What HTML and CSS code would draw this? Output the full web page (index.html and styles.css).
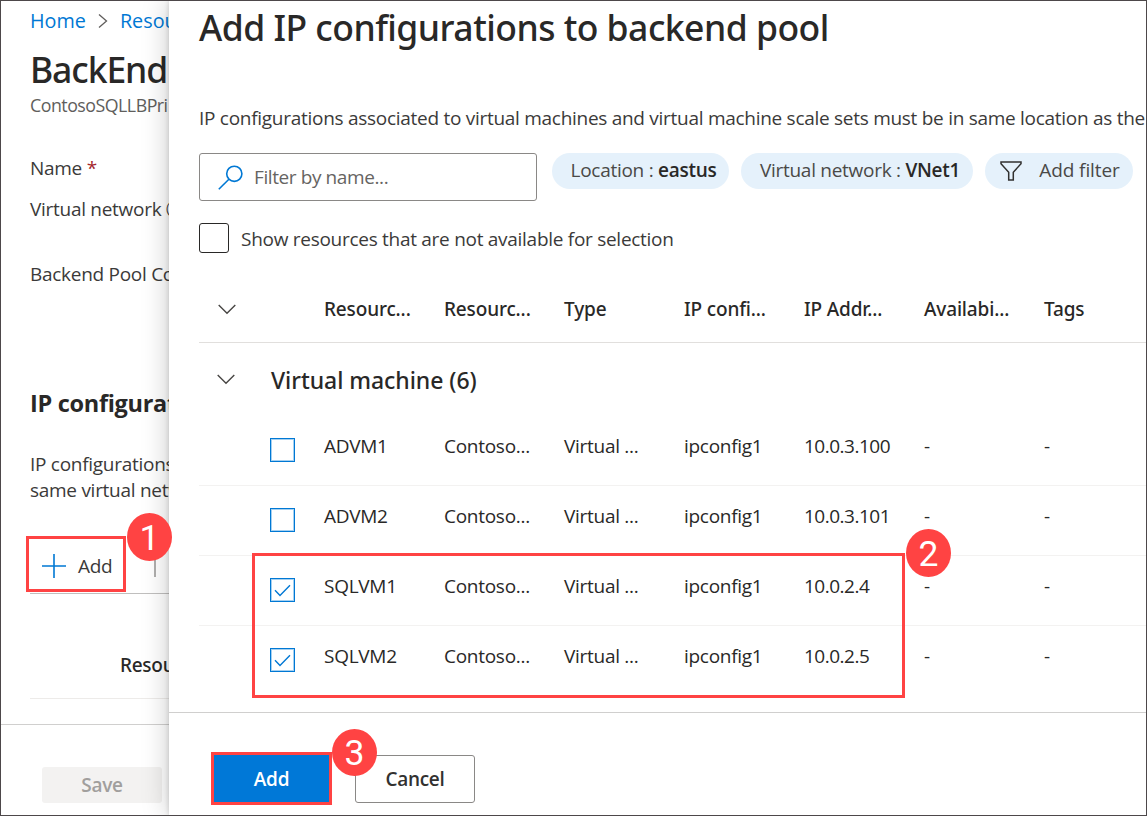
FILE: index.html
```html
<!DOCTYPE html>
<html lang="en">
<head>
<meta charset="utf-8">
<title>Add IP configurations to backend pool</title>
<link rel="stylesheet" href="styles.css">
</head>
<body>
<div class="frame">
  <aside class="blade">
    <nav class="crumbs"><a>Home</a><svg class="crumb-sep" width="10" height="16" viewBox="0 0 10 16"><path d="M1 1.5 8.5 8 1 14.5"/></svg><a>Resource</a></nav>
    <h1 class="blade-title">BackEnd</h1>
    <p class="blade-sub">ContosoSQLLBPri</p>
    <p class="field field-name">Name <span class="req">*</span></p>
    <p class="field field-vnet">Virtual network ⓘ</p>
    <p class="field field-pool">Backend Pool Configuration</p>
    <h2 class="section">IP configurations</h2>
    <p class="note">IP configurations<br>same virtual network</p>
    <div class="toolbar">
      <div class="tool-add">
        <svg width="24" height="24" viewBox="0 0 24 24"><path d="M12 0v24M0 12h24"/></svg>
        <span>Add</span>
        <i class="badge badge-one">1</i>
      </div>
      <i class="tool-sep"></i>
    </div>
    <div class="blade-head">Resource</div>
    <div class="blade-foot"><button class="save">Save</button></div>
  </aside>

  <main class="panel">
    <h1 class="title">Add IP configurations to backend pool</h1>
    <p class="desc">IP configurations associated to virtual machines and virtual machine scale sets must be in same location as the</p>
    <div class="filters">
      <div class="search">
        <svg width="25" height="25" viewBox="0 0 25 25"><circle cx="16.3" cy="8.8" r="7.6"/><path d="M10.9 14.2.8 24.3"/></svg>
        <span>Filter by name...</span>
      </div>
      <div class="chip chip-loc"><span>Location : <b>eastus</b></span></div>
      <div class="chip chip-net"><span>Virtual network : <b>VNet1</b></span></div>
      <div class="chip chip-add">
        <svg width="22" height="20" viewBox="0 0 22 20"><path d="M1 1h20v1.8l-7.7 8.4V19H8.7v-7.8L1 2.8z"/></svg>
        <span>Add filter</span>
      </div>
    </div>
    <div class="show"><i class="bigbox"></i><span>Show resources that are not available for selection</span></div>

    <section class="table">
      <div class="row head">
        <svg class="chev" width="18" height="11" viewBox="0 0 18 11"><path d="M.7 1 9 9.3 17.3 1"/></svg>
        <span>Resourc...</span><span>Resourc...</span><span>Type</span><span>IP confi...</span><span>IP Addr...</span><span>Availabi...</span><span>Tags</span>
      </div>
      <div class="group">
        <svg class="chev" width="18" height="11" viewBox="0 0 18 11"><path d="M.7 1 9 9.3 17.3 1"/></svg>
        <span>Virtual machine (6)</span>
      </div>
      <div class="row"><i class="box"></i><span>ADVM1</span><span>Contoso...</span><span>Virtual ...</span><span>ipconfig1</span><span class="ip">10.0.3.100</span><span>-</span><span>-</span></div>
      <div class="row"><i class="box"></i><span>ADVM2</span><span>Contoso...</span><span>Virtual ...</span><span>ipconfig1</span><span class="ip">10.0.3.101</span><span>-</span><span>-</span></div>
      <div class="picked">
        <div class="row"><i class="box"><svg width="17" height="13" viewBox="0 0 17 13"><path d="M1 6.2 6 11.4 16 1.2"/></svg></i><span>SQLVM1</span><span>Contoso...</span><span>Virtual ...</span><span>ipconfig1</span><span class="ip">10.0.2.4</span><span>-</span><span>-</span></div>
        <div class="row"><i class="box"><svg width="17" height="13" viewBox="0 0 17 13"><path d="M1 6.2 6 11.4 16 1.2"/></svg></i><span>SQLVM2</span><span>Contoso...</span><span>Virtual ...</span><span>ipconfig1</span><span class="ip">10.0.2.5</span><span>-</span><span>-</span></div>
        <div class="callout"><i class="badge badge-two">2</i></div>
      </div>
    </section>

    <footer class="foot">
      <button class="add">Add<i class="badge badge-three">3</i></button>
      <button class="cancel">Cancel</button>
    </footer>
  </main>
</div>
</body>
</html>
```
FILE: styles.css
```css
* { box-sizing: border-box; margin: 0; padding: 0; }
body {
  font-family: "Open Sans", "Noto Sans", sans-serif;
  font-size: 19px;
  line-height: 26px;
  letter-spacing: -0.28px;
  color: #3b3a39;
  background: #fff;
}
i { font-style: normal; }
svg { display: block; fill: none; flex: none; }
button { font: inherit; letter-spacing: inherit; }
.frame {
  display: flex;
  width: 1147px;
  height: 816px;
  border: 1px solid #4d484a;
  overflow: hidden;
}

/* Blade behind the panel */
.blade {
  display: flex;
  flex-direction: column;
  width: 168px;
  flex: none;
  white-space: nowrap;
}
.blade > * { margin-left: 29px; flex: none; }
.crumbs { display: flex; align-items: center; height: 26px; margin-top: 7px; font-size: 19.8px; letter-spacing: 0; color: #0078d4; }
.crumb-sep { margin: 0 12px 1px 12px; stroke: #605e5c; stroke-width: 1.3; }
.blade-title { margin-top: 11px; font-family: "Noto Sans", "Open Sans", sans-serif; font-size: 35.5px; line-height: 48px; font-weight: 500; letter-spacing: -1.1px; color: #292827; }
.blade-sub { margin-top: -1px; font-size: 17.8px; letter-spacing: -0.5px; color: #605e5c; }
.field-name { margin-top: 37px; }
.req { color: #a4262c; }
.field-vnet { margin-top: 15px; }
.field-pool { margin-top: 39px; }
.section { margin-top: 100px; font-size: 23.5px; line-height: 32px; font-weight: 700; letter-spacing: -0.3px; color: #292827; }
.note { margin-top: 32px; }
.toolbar { display: flex; height: 59px; margin-top: 32px; border-bottom: 1px solid #c0bfbe; }
.tool-add {
  position: relative;
  z-index: 3;
  display: flex;
  align-items: center;
  gap: 12px;
  width: 100px;
  height: 56px;
  margin: 1px 0 0 -4px;
  padding: 3px 0 0 13px;
  border: 3px solid #ff4343;
}
.tool-add svg { stroke: #0078d4; stroke-width: 1.6; }
.tool-sep { width: 2px; height: 27px; margin: 15px 0 0 28px; background: #b0afae; }
.blade-head { height: 47px; margin-top: 58px; padding-left: 90px; font-family: "Noto Sans", "Open Sans", sans-serif; font-weight: 500; color: #292827; border-bottom: 1px solid #edebe9; }
.blade .blade-foot { margin: 25px 0 0; padding: 42px 0 0 41px; border-top: 1px solid #d0cfce; }
.save { width: 120px; height: 36px; border: 0; border-radius: 3px; background: #f3f2f1; color: #a19f9d; font-weight: 600; }

/* Panel */
.panel {
  position: relative;
  display: flex;
  flex-direction: column;
  width: 977px;
  flex: none;
  padding-left: 30px;
  background: #fff;
  box-shadow: 0 0 26px rgba(0, 0, 0, .22), 0 0 5px rgba(0, 0, 0, .16);
  white-space: nowrap;
}
.title { margin-top: 2px; font-family: "Noto Sans", "Open Sans", sans-serif; font-size: 35.5px; line-height: 48px; font-weight: 500; letter-spacing: -0.52px; color: #292827; }
.desc { margin-top: 54px; overflow: hidden; }
.filters { display: flex; gap: 12px; margin-top: 22px; }
.search {
  display: flex;
  align-items: center;
  gap: 11px;
  width: 338px;
  height: 48px;
  margin-right: 3px;
  padding-left: 18px;
  border: 1px solid #8a8886;
  border-radius: 3px;
  color: #666462;
}
.search span { letter-spacing: -0.4px; }
.search svg { stroke: #0078d4; stroke-width: 1.6; }
.chip { display: flex; justify-content: center; height: 36px; padding-top: 4px; border-radius: 18px; background: #e5f1fb; color: #4a4947; }
.chip b { font-weight: 600; color: #292827; }
.chip-loc { width: 177px; padding-left: 6px; }
.chip-net { width: 232px; padding-left: 6px; }
.chip-add { width: 148px; gap: 17px; padding-left: 2px; }
.chip-add span { letter-spacing: -0.1px; }
.chip-add svg { margin-top: 4px; stroke: #323130; stroke-width: 1.5; }
.show { display: flex; gap: 12px; margin-top: 22px; align-items: center; height: 30px; }
.show span { padding-top: 1px; }
.bigbox { width: 30px; height: 30px; border: 1.5px solid #292827; border-radius: 3px; }

.table { margin-top: 43px; color: #292827; }
.row { display: grid; grid-template-columns: 125px repeat(7, 120px); width: 948px; height: 70px; padding-top: 17px; border-bottom: 1px solid #f3f2f1; overflow: hidden; }
.row .ip { letter-spacing: -0.5px; }
.head { height: 47px; padding-top: 0; font-family: "Noto Sans", "Open Sans", sans-serif; font-weight: 500; letter-spacing: -0.15px; border-bottom-color: #e1dfdd; }
.chev { stroke: #484644; stroke-width: 1.4; }
.head .chev { margin: 8px 0 0 19px; }
.group { display: flex; height: 73px; padding: 21px 0 0 18px; }
.group .chev { margin-top: 10px; }
.group span { margin-left: 36px; font-family: "Noto Sans", "Open Sans", sans-serif; font-size: 23px; line-height: 32px; font-weight: 500; letter-spacing: -0.05px; }
.box { display: flex; align-items: center; justify-content: center; width: 25px; height: 24px; margin: 5px 0 0 71px; border: 1.6px solid #0078d4; box-shadow: inset 0 0 0 1px rgba(0, 120, 212, .35); }
.box svg { stroke: #0078d4; stroke-width: 1.4; }
.picked { position: relative; }
.picked .row:nth-child(2) { border-bottom-color: transparent; }
.callout { position: absolute; left: 53px; top: -3px; width: 653px; height: 145px; border: 3px solid #ff4343; }

.foot { display: flex; height: 103px; margin: auto 0 0 -30px; padding: 39px 0 0 42px; border-top: 1px solid #d0cfce; font-weight: 600; }
.add { position: relative; width: 121px; height: 53px; border: 3px solid #ff4343; background: #0078d7; color: #fff; }
.cancel { width: 120px; height: 48px; margin: 3px 0 0 23px; border: 1px solid #8a8886; border-radius: 3px; background: #fff; color: #323130; }

/* Numbered step markers */
.badge {
  position: absolute;
  z-index: 2;
  width: 45px;
  height: 48px;
  border-radius: 50%;
  background: #ff4343;
  color: #fff;
  font: 400 35.5px/50px Roboto, Arial, sans-serif;
  letter-spacing: 0;
  text-align: center;
}
.badge-one { left: 98px; top: -26px; }
.badge-two { left: 651px; top: -27px; }
.badge-three { left: 118px; top: -26px; height: 47px; line-height: 48px; }
```
